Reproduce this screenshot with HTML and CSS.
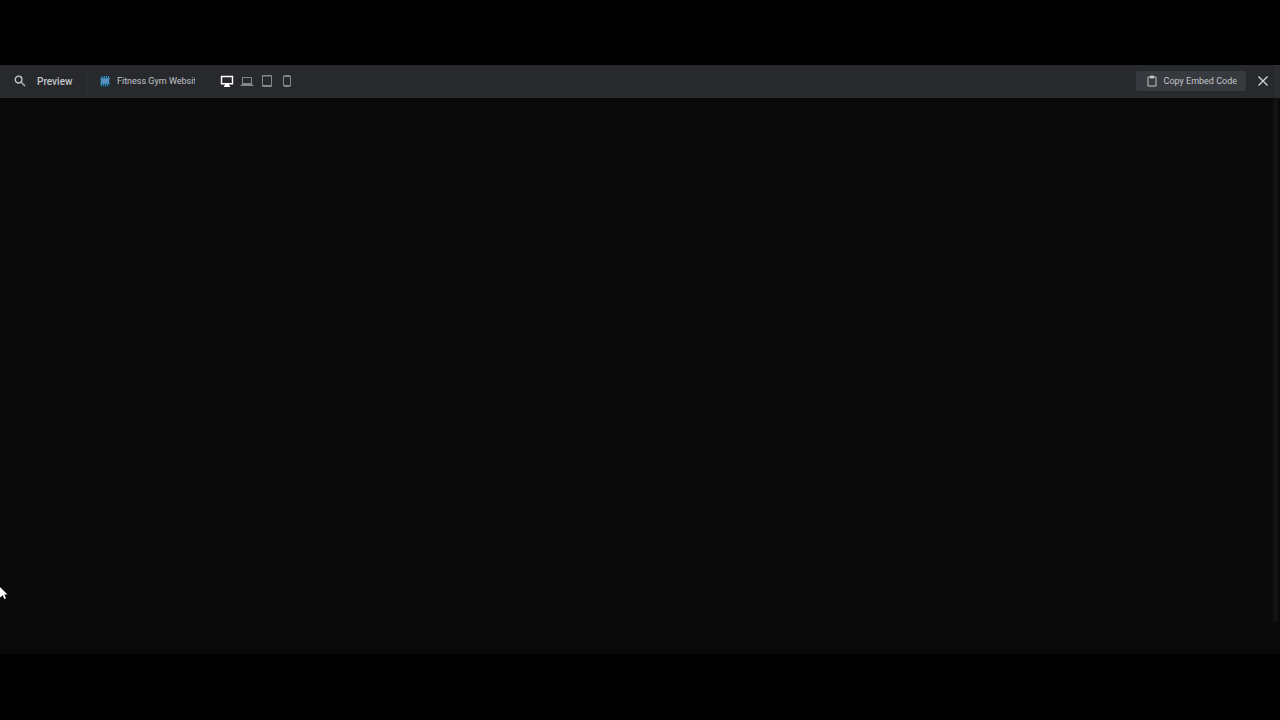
FILE: index.html
```html
<!DOCTYPE html>
<html lang="en">
<head>
<meta charset="utf-8">
<title>Preview</title>
<meta name="viewport" content="width=device-width, initial-scale=1">
<link rel="stylesheet" href="styles.css">
</head>
<body>
<div class="app">
  <header class="toolbar">
    <div class="brand">
      <svg class="search" viewBox="0 0 12 12" aria-hidden="true"><circle cx="4.6" cy="4.6" r="3.4"/><path d="M7.1 7.1 11 11"/></svg>
      <h1 class="title">Preview</h1>
    </div>
    <div class="project">
      <svg class="logo" viewBox="0 0 12 12" aria-hidden="true"><rect class="logo-back" x="1" y="1" width="10" height="11" rx="2"/><path class="logo-rays" d="M3.5 1v2M5.5 1v2M7.5 1v2M9.5 1v2M1 3.5h10M1 8.5h10M2.5 9v2M4.5 8v3M6.5 8v3M8.5 8v3"/><rect class="logo-core" x="2" y="4" width="8" height="4"/></svg>
      <input class="name" type="text" value="Fitness Gym Website" aria-label="Project name">
    </div>
    <div class="devices">
      <button class="device active" type="button" aria-label="Desktop"><svg viewBox="0 0 14 14"><path d="M1.5 2.5h11v7.2h-11zM4 12.3h6M5.7 9.7v2.4M8.3 9.7v2.4M7 9.7v2.4"/></svg></button>
      <button class="device" type="button" aria-label="Laptop"><svg viewBox="0 0 14 14"><path d="M2.5 3.5h9v6h-9zM.5 11.5h13M1.5 10.5h11"/></svg></button>
      <button class="device" type="button" aria-label="Tablet"><svg viewBox="0 0 14 14"><path d="M2.5 1.5h9v11h-9zM2.5 2h9M2.5 11.5h9"/></svg></button>
      <button class="device" type="button" aria-label="Phone"><svg viewBox="0 0 14 14"><rect x="3.5" y="1.5" width="7" height="11" rx="1"/><path d="M3.5 2.5h7M3.5 11.5h7"/></svg></button>
    </div>
    <button class="copy" type="button">
      <svg viewBox="0 0 12 12" aria-hidden="true"><path d="M2 2h8v9H2z"/><path class="clip" d="M4.5 1h3v2h-3z"/></svg>
      <span>Copy Embed Code</span>
    </button>
    <button class="close" type="button" aria-label="Close"><svg viewBox="0 0 12 12"><path d="M1.5 1.5l9 9M10.5 1.5l-9 9"/></svg></button>
  </header>
  <main class="stage"><div class="scroll"></div></main>
  <svg class="cursor" viewBox="0 0 8 14" aria-hidden="true"><path d="M0 1 7.5 8.5H4.3L6 12.2 4.3 13 2.7 9.3 0 11.5z"/></svg>
</div>
</body>
</html>
```
FILE: styles.css
```css
* { box-sizing: border-box; }
body {
  margin: 0;
  background: #000;
  color: #c3c6ca;
  font-family: Roboto, sans-serif;
  font-size: 9px;
}
button, input {
  border: 0;
  padding: 0;
  background: none;
  color: inherit;
  font: inherit;
}
svg {
  display: block;
  fill: none;
  stroke: currentColor;
}
.app {
  position: relative;
  display: flex;
  flex-direction: column;
  min-height: 100vh;
  padding: 65px 0 66px;
}
.toolbar {
  display: flex;
  align-items: center;
  height: 33px;
  padding: 0 5px 1px 0;
  background: #27292d;
  border-right: 6px solid #2b2d31;
}
.brand {
  display: flex;
  align-items: center;
  gap: 11px;
  width: 88px;
  height: 100%;
  padding-left: 14px;
  border-right: 1px solid #2b2d31;
}
.search {
  width: 12px;
  height: 12px;
  stroke-width: 1.3;
}
.title {
  margin: 0;
  font-size: 10px;
  font-weight: 500;
}
.project {
  display: flex;
  align-items: center;
  gap: 6px;
  width: 118px;
  height: 100%;
  padding: 0 10px 0 11px;
  border-right: 1px solid #2b2d31;
}
.logo {
  flex: none;
  width: 12px;
  height: 12px;
}
.logo-back { fill: #123f51; stroke: none; }
.logo-rays { stroke: #4286b0; }
.logo-core { fill: #5990bf; stroke: none; }
.name {
  min-width: 0;
  flex: 1;
}
.devices {
  display: flex;
  gap: 6px;
  margin: 0 auto 0 14px;
}
.device { color: #85878a; }
.device svg { width: 14px; height: 14px; }
.active { color: #fff; stroke-width: 1.4; }
.copy {
  display: flex;
  align-items: center;
  gap: 6px;
  height: 20px;
  padding: 0 9px 0 10px;
  border-radius: 2px;
  background: #36393d;
}
.copy svg { width: 12px; height: 12px; }
.clip { fill: currentColor; }
.close { margin-left: 11px; color: #d5d6d8; }
.close svg { width: 12px; height: 12px; stroke-width: 1.3; }
.stage {
  flex: 1;
  display: flex;
  justify-content: flex-end;
  padding: 0 2px 32px 0;
  background: #090909;
}
.scroll { width: 5px; background: #111212; }
.cursor {
  position: absolute;
  top: 586px;
  left: 0;
  width: 8px;
  height: 14px;
  fill: #fff;
  stroke: none;
}
```
